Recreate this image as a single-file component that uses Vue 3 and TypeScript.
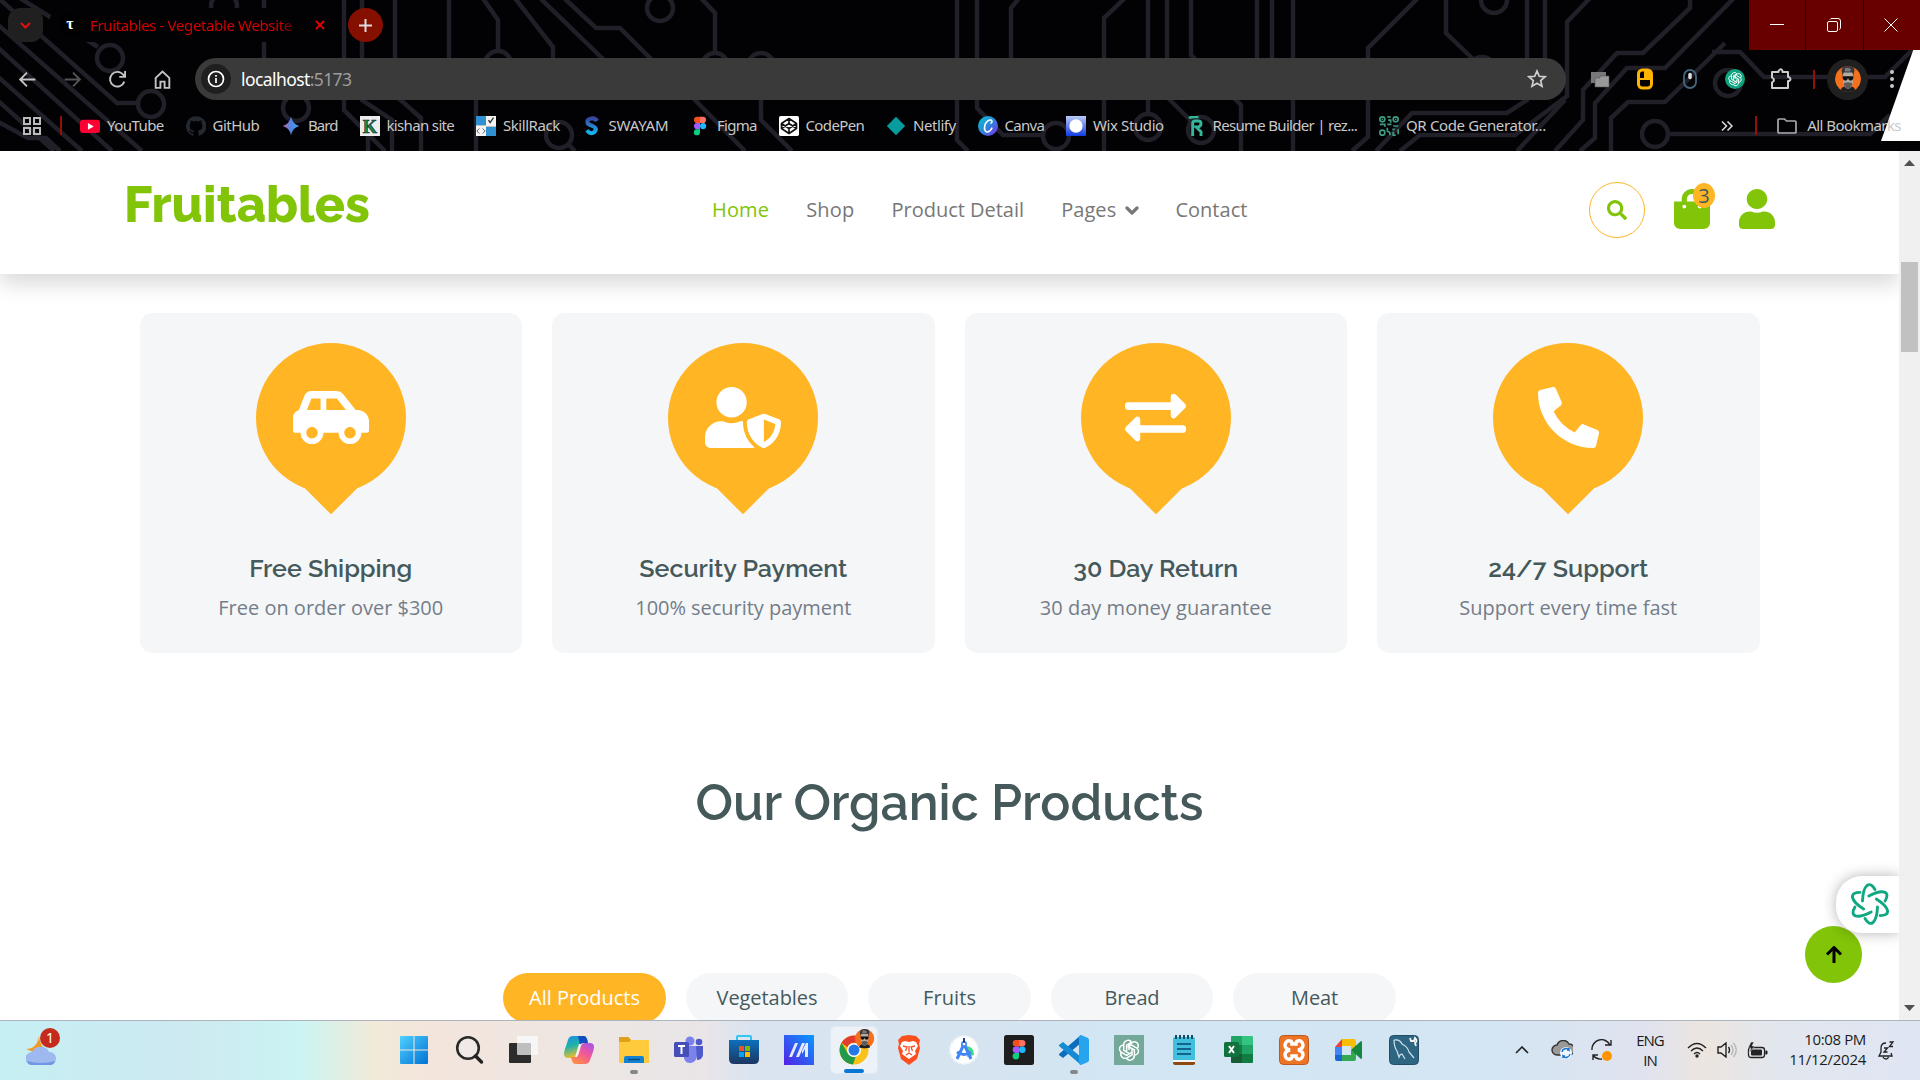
<script setup lang="ts">
import type { Directive } from 'vue'

// Spreads a label over a given width by adjusting its tracking.
const vFit: Directive<HTMLElement, number> = {
  mounted(el, binding) {
    const chars = (el.textContent ?? '').trim().length
    const natural = el.getBoundingClientRect().width
    if (chars > 1) el.style.letterSpacing = `${(binding.value - natural) / (chars - 0.5)}px`
  },
}

interface Bookmark { name: string; width: number; icon: string }
interface Feature { title: string; titleWidth: number; text: string; textWidth: number; box: string; iconWidth: number; path: string }

const face = '<circle cx="12" cy="12" r="12" fill="#f5701c"/><path d="M5 23q1-4 5-4h4q4 0 5 4-3 1-7 1t-7-1z" fill="#1c2026"/><path d="M7.500 7q0-2 4.500-2t4.500 2v8q-1 6-4.500 6t-4.500-6z" fill="#b3aba6"/><path d="M7 9 6 4q1-4 6-4 6 0 6 4l-1 5-1-3H8z" fill="#34363a"/><path d="M9 2q3-1 6 1l-1 2H9z" fill="#77787b"/><path d="M7 9.500h10v1.500q-.5 2.500-2.500 2.500T12 11q-.5 2.500-2.500 2.500T7 11z" fill="#111"/><path d="M8 16q4-2 8 0-1 5-4 5t-4-5z" fill="#5c5957"/>'
const knot = '<g fill="none" stroke="currentColor" stroke-width="1.500"><path d="M12 12V6.500l4-2.400q3.500-1 5 2 .8 2-.3 4"/><path d="M9.600 13.300V7.200l5.100-3q-2-2.700-5-1.600-3 1-3 4.200v5.600l5.300 3"/><path d="M6.700 7q-4 .5-4.200 4 0 2.200 2 3.400l5.200 3 5-3"/><path d="M4 14.300q-1 3.700 2 5.500 2 1 4 0l5-3v-5.600"/><path d="M9.400 20.200q2 2.700 5 1.700 3-1.200 3-4.300V12L12 9"/><path d="M17.300 17.200q4-.7 4.200-4 0-2.200-2-3.400l-5.200-3-4 2.300"/></g>'

const bookmarks: Bookmark[] = [
  { name: 'YouTube', width: 57, icon: '<rect y="4.500" width="24" height="16" rx="4" fill="#ff0033"/><path d="M9.500 8.500v8l7-4z" fill="#fff"/>' },
  { name: 'GitHub', width: 47, icon: '<path fill="#24292f" d="M12 .3a12 12 0 0 0-3.800 23.400c.6.1.8-.3.8-.6v-2.200c-3.300.7-4-1.400-4-1.400-.6-1.400-1.400-1.800-1.400-1.800-1-.7.1-.7.1-.7 1.200.1 1.900 1.200 1.900 1.200 1 1.800 2.800 1.300 3.500 1 .1-.8.400-1.300.8-1.600-2.700-.3-5.500-1.300-5.500-6 0-1.200.5-2.300 1.300-3.100-.2-.4-.6-1.600 0-3.200 0 0 1-.3 3.400 1.200a11.500 11.500 0 0 1 6 0c2.300-1.500 3.300-1.200 3.300-1.200.6 1.600.2 2.800 0 3.200.8.8 1.300 1.900 1.300 3.200 0 4.600-2.800 5.600-5.500 5.900.5.4.9 1.100.9 2.300v3.300c0 .3.100.7.800.6A12 12 0 0 0 12 .3"/>' },
  { name: 'Bard', width: 30, icon: '<defs><linearGradient id="bard"><stop stop-color="#c86a9a"/><stop offset=".5" stop-color="#4f86e8"/><stop offset="1" stop-color="#3aa0ef"/></linearGradient></defs><path d="M12 1q2 9 10 11-8 2-10 11-2-9-10-11 8-2 10-11z" fill="url(#bard)"/>' },
  { name: 'kishan site', width: 68, icon: '<rect width="24" height="24" fill="#ececec"/><text x="12" y="20" text-anchor="middle" font-family="Liberation Serif,serif" font-weight="bold" font-size="22" fill="#1c8a3e" stroke="#123" stroke-width=".7">K</text>' },
  { name: 'SkillRack', width: 57, icon: '<path fill="#2f91cf" d="M0 0h12v11H0zM12 13h12v11H12z"/><path fill="#f4f4f4" d="M12 0h12v13H12zM0 11h12v13H0z"/><path d="m15 5 2 3 4-6" stroke="#333" stroke-width="1.600" fill="none"/><path d="m4 15-3 3 3 3m4-6 3 3-3 3" stroke="#444" fill="none"/>' },
  { name: 'SWAYAM', width: 60, icon: '<defs><linearGradient id="sw" x2="0" y2="1"><stop stop-color="#39459f"/><stop offset="1" stop-color="#13b5f0"/></linearGradient></defs><path d="M18 6q-2-4-7-3-6 1-4 6 2 2 6 3 6 3 2 7-5 4-9-2" fill="none" stroke="url(#sw)" stroke-width="5"/>' },
  { name: 'Figma', width: 40, icon: '<path d="M12 1H8.500a3.700 3.700 0 0 0 0 7.400H12z" fill="#f24e1e"/><path d="M12 1h3.500a3.700 3.700 0 0 1 0 7.400H12z" fill="#ff7262"/><path d="M12 8.400H8.500a3.700 3.700 0 0 0 0 7.400H12z" fill="#a259ff"/><circle cx="15.700" cy="12.100" r="3.700" fill="#1abcfe"/><path d="M12 15.800H8.500a3.700 3.700 0 1 0 3.500 3.700z" fill="#0acf83"/>' },
  { name: 'CodePen', width: 59, icon: '<rect width="24" height="24" rx="2" fill="#fff"/><path d="m12 3 9 6v6l-9 6-9-6V9zM3 9l9 6 9-6M3 15l9-6 9 6M12 3v6m0 6v6" fill="none" stroke="#111" stroke-width="2" stroke-linejoin="round"/>' },
  { name: 'Netlify', width: 43, icon: '<path d="m12 1 11 11-11 11L1 12z" fill="#089c9c"/>' },
  { name: 'Canva', width: 40, icon: '<defs><linearGradient id="cv" x1="0" y1="0" x2="1" y2="1"><stop stop-color="#00c4cc"/><stop offset=".5" stop-color="#2d86dc"/><stop offset="1" stop-color="#7d2ae8"/></linearGradient></defs><circle cx="12" cy="12" r="12" fill="url(#cv)"/><path d="M15 9q3-2 1-4-4-1-7 4-3 7 1 10 4 1 7-5" fill="none" stroke="#fff" stroke-width="1.900"/>' },
  { name: 'Wix Studio', width: 71, icon: '<defs><linearGradient id="wx" x2="0" y2="1"><stop stop-color="#b9cbf6"/><stop offset="1" stop-color="#113be0"/></linearGradient></defs><rect width="24" height="24" fill="url(#wx)"/><circle cx="12" cy="12" r="8" fill="#fff"/>' },
  { name: 'Resume Builder | rez...', width: 145, icon: '<path d="M8 24V9q0-3 3-3h4q3 0 3 3t-3 4h-3l6 6v5M4 3q1-2 7-2h4" fill="none" stroke="#35b69b" stroke-width="3.500"/>' },
  { name: 'QR Code Generator...', width: 140, icon: '<g fill="none" stroke="#3d9c82" stroke-width="2"><circle cx="4" cy="4" r="3"/><circle cx="20" cy="4" r="3"/><circle cx="4" cy="20" r="3"/><path d="M10 1h4M11 5h3v3M1 10h6v3m3-3h5m2 2h6M10 14v4l3 2v3m3-7h3m4 0v6m-6-3v4h3"/></g><circle cx="4" cy="4" r="1" fill="#3d9c82"/><circle cx="20" cy="4" r="1" fill="#3d9c82"/>' },
]

const features: Feature[] = [
  { title: 'Free Shipping', titleWidth: 163, text: 'Free on order over $300', textWidth: 225, box: '0 0 640 512', iconWidth: 76, path: 'M544 192h-16L419.22 56.02A64.025 64.025 0 0 0 369.24 32H155.33c-26.17 0-49.7 15.93-59.42 40.23L48 194.26C20.44 201.4 0 226.21 0 256v112c0 8.84 7.16 16 16 16h48c0 53.02 42.98 96 96 96s96-42.98 96-96h128c0 53.02 42.98 96 96 96s96-42.98 96-96h48c8.84 0 16-7.16 16-16v-80c0-53.02-42.98-96-96-96zM160 432c-26.47 0-48-21.53-48-48s21.53-48 48-48 48 21.53 48 48-21.53 48-48 48zm72-240H116.93l38.4-96H232v96zm48 0V96h89.24l76.8 96H280zm200 240c-26.47 0-48-21.53-48-48s21.53-48 48-48 48 21.53 48 48-21.53 48-48 48z' },
  { title: 'Security Payment', titleWidth: 208, text: '100% security payment', textWidth: 216, box: '0 0 640 512', iconWidth: 76, path: 'M622.3 271.1l-115.2-45c-4.1-1.6-12.6-3.7-22.2 0l-115.2 45c-10.7 4.2-17.7 14-17.7 24.9 0 111.6 68.7 188.8 132.9 213.9 9.6 3.7 18 1.6 22.2 0C558.4 489.9 640 420.5 640 296c0-10.9-7-20.7-17.7-24.9zM496 462.4V273.3l95.5 37.3c-5.6 87.1-60.9 135.4-95.5 151.8zM224 256c70.7 0 128-57.3 128-128S294.7 0 224 0 96 57.3 96 128s57.3 128 128 128zm96 40c0-2.5.8-4.8 1.1-7.2-2.5-.1-4.9-.8-7.5-.8h-16.7c-22.2 10.2-46.9 16-72.9 16s-50.6-5.8-72.9-16h-16.7C60.2 288 0 348.2 0 422.4V464c0 26.5 21.5 48 48 48h352c6.8 0 13.3-1.5 19.2-4-54-42.9-99.2-116.7-99.2-212z' },
  { title: '30 Day Return', titleWidth: 165, text: '30 day money guarantee', textWidth: 232, box: '0 0 512 512', iconWidth: 61, path: 'M0 168v-16c0-13.255 10.745-24 24-24h360V80c0-21.367 25.899-32.042 40.971-16.971l80 80c9.372 9.373 9.372 24.569 0 33.941l-80 80C409.956 271.982 384 261.456 384 240v-48H24c-13.255 0-24-10.745-24-24zm488 152H128v-48c0-21.314-25.862-32.08-40.971-16.971l-80 80c-9.372 9.373-9.372 24.569 0 33.941l80 80C102.057 463.997 128 453.437 128 432v-48h360c13.255 0 24-10.745 24-24v-16c0-13.255-10.745-24-24-24z' },
  { title: '24/7 Support', titleWidth: 160, text: 'Support every time fast', textWidth: 218, box: '0 0 512 512', iconWidth: 61, path: 'M497.39 361.8l-112-48a24 24 0 0 0-28 6.9l-49.6 60.6A370.66 370.66 0 0 1 130.6 204.11l60.6-49.6a23.94 23.94 0 0 0 6.9-28l-48-112A24.16 24.16 0 0 0 122.6.61l-104 24A24 24 0 0 0 0 48c0 256.5 207.9 464 464 464a24 24 0 0 0 23.4-18.6l24-104a24.29 24.29 0 0 0-14.01-27.6z' },
]

const categories = [
  { name: 'All Products', width: 111 },
  { name: 'Vegetables', width: 101 },
  { name: 'Fruits', width: 53 },
  { name: 'Bread', width: 55 },
  { name: 'Meat', width: 47 },
]

// Taskbar pictograms, all on a 30 x 30 grid.
const apps: { id: string; art: string; state?: string }[] = [
  { id: 'start', art: '<defs><linearGradient id="wn" x1="0" y1="0" x2="1" y2="1"><stop stop-color="#4fd0ff"/><stop offset="1" stop-color="#0072d4"/></linearGradient></defs><path d="M1 2q0-1 1-1h12.500v13.500H1zM15.500 1H28q1 0 1 1v12.500H15.500zM1 15.500h13.500V29H2q-1 0-1-1zM15.500 15.500H29V28q0 1-1 1H15.500z" fill="url(#wn)"/>' },
  { id: 'search', art: '<circle cx="14" cy="13" r="10.800" fill="#eee" fill-opacity=".5" stroke="#2a2a2a" stroke-width="2.600"/><path d="m21.500 21 6 6" stroke="#222" stroke-width="3.400" stroke-linecap="round"/>' },
  { id: 'views', art: '<rect y="8" width="22" height="20" rx="1" fill="#2c2c2c"/><rect x="8" y="1" width="21" height="19" rx="1" fill="#f6f6f6" fill-opacity=".72"/><path d="M22 1h7v19h-7zM8 1h14v7H8z" fill="#f6f6f6"/>' },
  { id: 'copilot', art: '<defs><linearGradient id="c1" x2=".3" y2="1"><stop stop-color="#1b8fe8"/><stop offset=".5" stop-color="#20b3a6"/><stop offset="1" stop-color="#f0c02c"/></linearGradient><linearGradient id="c2" x1="1" y1="0" x2=".3" y2="1"><stop stop-color="#9a55f5"/><stop offset=".5" stop-color="#f0569b"/><stop offset="1" stop-color="#ff8a4a"/></linearGradient></defs><path d="M9 1h11q2 0 3 3l1 4h-5q-3 0-4 4l-2 8q-1 3-4 3H4q-4 0-4-4 0-2 1-5l3-9q1-4 5-4z" fill="url(#c1)"/><path d="M14 1h6q2 0 3 3l1 4h-5q-2 0-3 2z" fill="#134dc0"/><path d="M21 29H11q-2 0-3-3l-1-4h4q3 0 4-4l2-7q1-3 4-3h5q4 0 4 4 0 2-1 5l-3 8q-1 4-5 4z" fill="url(#c2)"/><path d="M17 9h-2l-4 13h2z" fill="#f6eef0"/>' },
  { id: 'files', state: 'idle', art: '<path d="M0 2h9l4 4h15v7H0z" fill="#dc9a10"/><rect y="5" width="30" height="23" rx="1" fill="#ffcb3d"/><path d="M0 2h9l3 3-2 2H0z" fill="#e0a01b"/><path d="M5 28v-5q0-2 2-2h16q2 0 2 2v5z" fill="#1483cf"/><path d="M9 24.500h12" stroke="#064c88" stroke-width="1.500"/>' },
  { id: 'teams', art: '<circle cx="16" cy="6" r="4.500" fill="#7b83eb"/><circle cx="25" cy="7" r="3.300" fill="#5059c9"/><path d="M10 11h13v10q-1 7-7 7-5 0-6-5z" fill="#7b83eb"/><path d="M22 11h7v9q-1 5-6 5z" fill="#5059c9"/><rect y="7" width="15" height="15" rx="1.500" fill="#464eb8"/><path d="M4 11h7M7.500 11v8" stroke="#fff" stroke-width="2"/>' },
  { id: 'store', art: '<defs><linearGradient id="st" x2="0" y2="1"><stop stop-color="#0c70bc"/><stop offset="1" stop-color="#1c365f"/></linearGradient></defs><path d="M8 6V2q0-1 1-1h12q1 0 1 1v4" fill="none" stroke="#31c6f2" stroke-width="2"/><path d="M0 5h30v19q0 5-5 5H5q-5 0-5-5z" fill="url(#st)"/><path d="M10 11h5v5h-5z" fill="#f25022"/><path d="M16 11h5v5h-5z" fill="#7fba00"/><path d="M10 17h5v5h-5z" fill="#00a4ef"/><path d="M16 17h5v5h-5z" fill="#ffb900"/>' },
  { id: 'myasus', art: '<defs><linearGradient id="ma" x1="0" y1="1" x2="1" y2="0"><stop stop-color="#5420e4"/><stop offset="1" stop-color="#079bff"/></linearGradient></defs><rect width="30" height="30" fill="url(#ma)"/><path d="m5 22 6-14h3L8 22zM12 22l6-14h3l-6 14zM18 16l4-8h2v14h-3v-8l-3 5z" fill="#e6e9ff"/>' },
  { id: 'chrome', state: 'active', art: '<circle cx="15" cy="15" r="14.500" fill="#fbc116"/><path d="M2.500 7.700A14.500 14.500 0 0 1 27.500 7.700H15a7 7 0 0 0-6.500 4.500z" fill="#e33b2e"/><path d="M2.500 7.700 9 18.500q3 4 7.500 3.500L14 29.500A14.500 14.500 0 0 1 2.500 7.700z" fill="#229a49"/><circle cx="15" cy="15" r="7" fill="#fff"/><circle cx="15" cy="15" r="5.500" fill="#2478e8"/><g transform="translate(16 -6) scale(.8)">' + face + '</g>' },
  { id: 'brave', art: '<path d="m8 1 7-1 7 1 4 4-1 4 1 4-3 11-8 6-8-6L4 13l1-4-1-4z" fill="#fb4f20"/><path d="m8 7 3-1 4 1 4-1 3 1 2 4-3 5 1 3-7 5-7-5 1-3-3-5z" fill="#fff"/><path d="m9 11 4 1-1.500 4M21 11l-4 1 1.500 4M12 20l3-2 3 2M15 11v6" fill="none" stroke="#fb4f20" stroke-width="1.300"/>' },
  { id: 'studio', art: '<circle cx="15" cy="15" r="14" fill="#fff" stroke="#edf3fa" stroke-width="2" stroke-dasharray="3 2"/><path d="M18 11q7 1 7 9l-7 2z" fill="#3ddc84"/><path d="m15 9-7 15m7-15 7 15M8 17q7 5 14 0" fill="none" stroke="#4285f4" stroke-width="3"/><circle cx="15" cy="9" r="3" fill="#4285f4"/><path d="M15 3v5" stroke="#1b3f87" stroke-width="2"/><circle cx="15" cy="9" r="1.300" fill="#fff"/>' },
  { id: 'figma', art: '<rect width="30" height="30" rx="2.500" fill="#1e1e1e"/><g transform="translate(4.500 4) scale(.88)">' + bookmarks[6].icon + '</g>' },
  { id: 'code', state: 'idle', art: '<path d="M22 0v8L4 23l-4-3v-1z" fill="#0b6ebd"/><path d="M0 11v-1l4-3 18 15v8z" fill="#168bd5"/><path d="m22 0 7 3q1 1 1 2v20q0 1-1 2l-7 3-2-1V1z" fill="#27a4ee"/>' },
  { id: 'chatgpt', art: '<rect width="30" height="30" fill="#74a899"/><g transform="translate(3 3)" color="#fff">' + knot + '</g>' },
  { id: 'notepad', art: '<rect x="4" y="2" width="22" height="25" rx="2" fill="#42bfdc"/><path d="M4 27h22v2q-1 1-2 1H6q-2 0-2-3z" fill="#8b4a13"/><path d="M4 25h22v2H4z" fill="#f4f4f4"/><path d="M7 0v4m4-4v4m4-4v4m4-4v4m4-4v4" stroke="#124c68" stroke-width="2"/><path d="M8 9h14M8 14h14M8 19h14" stroke="#11658a" stroke-width="1.800"/>' },
  { id: 'excel', art: '<path d="M7 2q0-1 1-1h10v9H7z" fill="#21a366"/><path d="M18 1h10q1 0 1 1v8H18z" fill="#33c481"/><path d="M7 10h11v9H7z" fill="#107c41"/><path d="M18 10h11v9H18z" fill="#21a366"/><path d="M7 19h11v9H8q-1 0-1-1z" fill="#185c37"/><path d="M18 19h11v8q0 1-1 1H18z" fill="#107c41"/><rect y="7" width="15" height="15" rx="1.500" fill="#10723c"/><path d="m5 11 5 7m0-7-5 7" stroke="#fff" stroke-width="2"/>' },
  { id: 'xampp', art: '<rect x=".5" y=".5" width="29" height="29" rx="4" fill="#ee7425" stroke="#bc5a1d"/><path d="M11 15q-5-1-5-5 1-5 5-4 2 0 2 3h4q0-3 2-3 4-1 5 4 0 4-5 5 5 1 5 5-1 5-5 4-2 0-2-3h-4q0 3-2 3-4 1-5-4 0-4 5-5z" fill="none" stroke="#fff" stroke-width="3.500"/>' },
  { id: 'meet', art: '<path d="M8 4v8H1z" fill="#ea4335"/><path d="M8 4h12q2 0 2 2v6l-5 3v-4H8z" fill="#fbbc04"/><path d="M1 12h7v8H1z" fill="#4285f4"/><path d="M1 20h7v6H3q-2 0-2-2z" fill="#1967d2"/><path d="M8 20h9v-5l5 3v6q0 2-2 2H8z" fill="#34a853"/><path d="m17 15 10-9q1 0 1 1v16q0 1-1 1z" fill="#16873f"/>' },
  { id: 'mysql', art: '<rect x=".5" y=".5" width="29" height="29" rx="4" fill="#2d6583" stroke="#234d66"/><path d="M5 5q6-1 8 4 6 3 7 8l5 6M5 5q0 7 3 11l2 6q1-3 3-3l3 5" fill="none" stroke="#d4e4ed" stroke-width="1.200"/><path d="m21 3 1 3 3 0 1-3q3 3 0 5l1 3" fill="none" stroke="#f4f4f4" stroke-width="1.800"/>' },
]

const traces = [
  'M15-5 98 47', 'M-5-5 117 103H137', 'M-5 22 142 151', 'M-5 45 112 151', 'M-5 74 82 151', 'M-5 98 54 151', 'M-5 120 28 138H46L60 151',
  'M264 0V60', 'M344 0V110L385 151', 'M362 0V100L392 120V151', 'M395 0V95L421 118V151', 'M449 0V60', 'M368 120V151', 'M476 95V151',
  'M482-3 498 20V60', 'M514-3 553 47V60', 'M539-3 604 60', 'M563-3 596 28H620L652 60', 'M700-3 715 13V60', 'M690 95 745 151', 'M761 60V120L792 151', 'M568 144 575 151',
  'M957 0V140L968 151', 'M977 0V108L1003 135H1041', 'M1020-3 1011 8V60', 'M1126-3 1104 18V151', 'M1148 0V112', 'M1167 0V60', 'M1191 0V55L1241 105V151', 'M1168 98 1194 124', 'M1257 0V60', 'M1272 0V60',
  'M1293 0V151', 'M1419-3 1368 48V137L1352 151', 'M1446 0V33L1474 60', 'M1527 0V100L1507 113H1412L1376 151', 'M1545 0V60', 'M1591-3 1567 22V96L1515 135H1420L1400 151', 'M1690 0V8L1643 53H1617L1583 90V120L1555 151', 'M1735-3 1665 68H1627L1595 103V138L1580 151', 'M1725 43 1665 102H1628L1611 118V151', 'M1712 52H1740L1764 77H1885L1920 42', 'M1669 134H1870L1890 115', 'M1565 100 1517 151',
]
const pads = [[110, 58], [151, 104], [224, 6], [296, 108], [498, 64], [559, 135], [660, 8], [715, 66], [761, 66], [1056, 136], [1148, 127], [1201, 130], [1494, 0], [1482, 70], [1728, 83], [1655, 134]]
</script>

<template>
  <div class="screen">
    <header class="chrome">
      <svg class="circuit" viewBox="0 0 1920 151">
        <path v-for="d in traces" :key="d" :d="d" />
        <circle v-for="p in pads" :key="p.join()" :cx="p[0]" :cy="p[1]" r="13" />
        <polygon points="1915,45 1920,45 1920,141 1881,141" />
      </svg>

      <div class="tabs">
        <div class="tab-search"><svg width="11" height="7" viewBox="0 0 11 7"><path d="m1 1 4.500 4.500L10 1" fill="none" stroke="#e01010" stroke-width="2" /></svg></div>
        <div class="tab">
          <span class="favicon">τ</span>
          <span class="tab-title"><span v-fit="202">Fruitables - Vegetable Website</span></span>
          <svg width="10" height="10" viewBox="0 0 10 10"><path d="m1 1 8 8m0-8L1 9" stroke="#e80000" stroke-width="1.800" /></svg>
        </div>
        <div class="new-tab"><svg width="13" height="13" viewBox="0 0 13 13"><path d="M6.500 0v13M0 6.500h13" stroke="#ddd" stroke-width="2" /></svg></div>
        <div class="window-buttons">
          <span><svg width="14" height="14"><path d="M0 6.500h14" stroke="#fff" /></svg></span>
          <span><svg width="14" height="14" viewBox="0 0 14 14"><g fill="none" stroke="#fff"><rect x=".5" y="3.500" width="10" height="10" rx="1.500" /><path d="M3 1.500Q3.500.5 5 .5h6q2.500 0 2.500 2.500v6q0 2-1 2.500" /></g></svg></span>
          <span><svg width="14" height="14"><path d="m.5.500 13 13m0-13-13 13" stroke="#fff" /></svg></span>
        </div>
      </div>

      <div class="toolbar">
        <svg class="nav-icon" viewBox="0 0 20 20"><path d="M17.500 10H3m6.500-6.500L3 10l6.500 6.500" /></svg>
        <svg class="nav-icon dim" viewBox="0 0 20 20"><path d="M2.500 10H17m-6.500-6.500L17 10l-6.500 6.500" /></svg>
        <svg class="nav-icon" viewBox="0 0 20 20"><path d="M16.500 12a7 7 0 1 1-1-6.500L17 7m.2-5v5.500h-5.500" /></svg>
        <svg class="nav-icon" viewBox="0 0 20 20"><path d="M3.500 8.500 10 2.500l6.500 6V18H12v-6H8v6H3.500z" /></svg>
        <div class="address">
          <span class="site-info"><svg width="18" height="18" viewBox="0 0 18 18"><circle cx="9" cy="9" r="7.500" fill="none" stroke="#fff" stroke-width="1.700" /><path d="M9 8v5M9 5v1.700" stroke="#fff" stroke-width="1.700" /></svg></span>
          <span class="url"><span v-fit="69">localhost</span><i v-fit="42">:5173</i></span>
          <svg width="20" height="20" viewBox="0 0 20 20"><path d="m10 2 2.300 5.300 5.700.5-4.300 3.800 1.300 5.700-5-3-5 3 1.300-5.700L2 7.800l5.700-.5z" fill="none" stroke="#d0d0d0" stroke-width="1.700" /></svg>
        </div>
        <div class="extensions">
          <svg width="20" height="20" viewBox="0 0 20 20"><path d="M1 3h15v11H1z" fill="#777" /><path d="M5 9h5V7h9v11H5z" fill="#999" stroke="#555" stroke-width=".6" /></svg>
          <svg width="20" height="22" viewBox="0 0 20 22"><rect x="3.500" y="2" width="13" height="18" rx="4" fill="none" stroke="#ffb500" stroke-width="3" /><path d="M3 11h14M10 2v9" stroke="#ffb500" stroke-width="2" /><path d="M4 2h6v9H4z" fill="#ffb500" fill-opacity="0" /><path d="M10 2h6v9h-6z" fill="#ffb500" /></svg>
          <svg width="20" height="22" viewBox="0 0 20 22"><rect x="4" y="2" width="12" height="18" rx="6" fill="none" stroke="#42677f" stroke-width="1.800" /><path d="M10 6.500v3" stroke="#ddd" stroke-width="3.500" stroke-linecap="round" /></svg>
          <svg width="20" height="20" viewBox="0 0 30 30"><circle cx="15" cy="15" r="15" fill="#10a37f" /><g transform="translate(3 3)" color="#fff" v-html="knot" /></svg>
          <svg width="22" height="22" viewBox="0 0 22 22"><path d="M2 4h6.500V3q2.500-3.500 4 0v1H18v5h1q3 2.500 0 4h-1v7H2v-5.500q4-2.500 0-5z" fill="none" stroke="#ccc" stroke-width="2" stroke-linejoin="round" /></svg>
        </div>
        <b class="rule" />
        <span class="profile"><svg width="26" height="26" viewBox="0 0 24 24" v-html="face" /></span>
        <svg class="menu" width="6" height="20"><g fill="#c8c8c8"><circle cx="3" cy="3" r="2" /><circle cx="3" cy="10" r="2" /><circle cx="3" cy="17" r="2" /></g></svg>
      </div>

      <div class="bookmarks">
        <svg class="apps-grid" width="20" height="20" viewBox="0 0 20 20"><g fill="none" stroke="#bbb" stroke-width="2"><path d="M2 2h6v6H2zM12 2h6v6h-6zM2 12h6v6H2zM12 12h6v6h-6z" /></g></svg>
        <b class="rule" />
        <div class="bookmark-list">
          <div v-for="b in bookmarks" :key="b.name" class="bookmark">
            <svg width="20" height="20" viewBox="0 0 24 24" v-html="b.icon" />
            <span class="bookmark-name" :style="{ width: b.width + 'px' }"><span v-fit="b.width">{{ b.name }}</span></span>
          </div>
        </div>
        <svg class="more" width="12" height="10" viewBox="0 0 12 10"><path d="m1 .5 4.500 4.500L1 9.500M6.500.5 11 5 6.500 9.500" fill="none" stroke="#ddd" stroke-width="1.500" /></svg>
        <b class="rule" />
        <svg class="folder" width="20" height="16" viewBox="0 0 20 16"><path d="M1 2q0-1 1-1h5.500l2 2H18q1 0 1 1v10q0 1-1 1H2q-1 0-1-1z" fill="none" stroke="#aaa" stroke-width="1.700" /></svg>
        <span class="all" v-fit="94">All Bookmarks</span>
      </div>
    </header>

    <div class="viewport">
      <main class="page">
        <nav class="site-nav">
          <div class="brand"><span v-fit="246">Fruitables</span></div>
          <div class="links">
            <a v-fit="57" class="current">Home</a>
            <a v-fit="48">Shop</a>
            <a v-fit="132.500">Product Detail</a>
            <a class="dropdown"><span v-fit="55">Pages</span><svg width="14" height="10" viewBox="0 0 14 10"><path d="m2 2 5 5 5-5" fill="none" stroke="#777" stroke-width="3.200" stroke-linecap="round" stroke-linejoin="round" /></svg></a>
            <a v-fit="72">Contact</a>
          </div>
          <div class="actions">
            <span class="search"><svg width="20" height="20" viewBox="0 0 512 512"><path d="M505 442.700L405.300 343c-4.500-4.500-10.600-7-17-7H372c27.600-35.300 44-79.700 44-128C416 93.100 322.900 0 208 0S0 93.100 0 208s93.100 208 208 208c48.300 0 92.700-16.400 128-44v16.300c0 6.400 2.500 12.500 7 17l99.700 99.700c9.400 9.400 24.600 9.400 33.900 0l28.300-28.300c9.400-9.400 9.400-24.600.1-34zM208 336c-70.700 0-128-57.200-128-128 0-70.700 57.200-128 128-128 70.700 0 128 57.200 128 128 0 70.700-57.200 128-128 128z" /></svg></span>
            <span class="bag"><svg width="36" height="40" viewBox="0 0 448 512" preserveAspectRatio="none"><path d="M352 160v-32C352 57.420 294.579 0 224 0 153.420 0 96 57.420 96 128v32H0v272c0 44.183 35.817 80 80 80h288c44.183 0 80-35.817 80-80V160h-96zm-192-32c0-35.290 28.710-64 64-64s64 28.710 64 64v32H160v-32zm160 120c-13.255 0-24-10.745-24-24s10.745-24 24-24 24 10.745 24 24-10.745 24-24 24zm-192 0c-13.255 0-24-10.745-24-24s10.745-24 24-24 24 10.745 24 24-10.745 24-24 24z" /></svg><em>3</em></span>
            <svg class="account" width="36" height="40" viewBox="0 0 448 512" preserveAspectRatio="none"><path d="M224 256c70.700 0 128-57.300 128-128S294.700 0 224 0 96 57.300 96 128s57.300 128 128 128zm89.600 32h-16.700c-22.200 10.200-46.900 16-72.900 16s-50.600-5.800-72.900-16h-16.700C60.200 288 0 348.200 0 422.400V464c0 26.500 21.500 48 48 48h352c26.500 0 48-21.500 48-48v-41.600c0-74.200-60.200-134.400-134.400-134.400z" /></svg>
          </div>
        </nav>

        <section class="features">
          <article v-for="f in features" :key="f.title" class="feature">
            <div class="marker"><svg :width="f.iconWidth" height="61" :viewBox="f.box"><path :d="f.path" fill="#fff" /></svg></div>
            <h5><span v-fit="f.titleWidth">{{ f.title }}</span></h5>
            <p><span v-fit="f.textWidth">{{ f.text }}</span></p>
          </article>
        </section>

        <h1><span v-fit="508">Our Organic Products</span></h1>

        <div class="pills">
          <span v-for="(c, i) in categories" :key="c.name" class="pill" :class="{ selected: i === 0 }"><span v-fit="c.width">{{ c.name }}</span></span>
        </div>

        <div class="to-top"><svg width="18" height="18" viewBox="0 0 18 18"><path d="M9 17V2M2 8.500l7-7 7 7" fill="none" stroke="#000" stroke-width="3" stroke-linejoin="round" /></svg></div>
        <div class="assistant">
          <svg width="42" height="46" viewBox="-21 -23 42 46"><g fill="none" stroke="#10a881" stroke-width="2.900" stroke-linecap="round"><path v-for="a in 6" :key="a" :transform="`rotate(${a * 60})`" d="M-7.500-3Q-7-15-3-18.500Q1-21.500 5-14.500" /></g></svg>
        </div>
      </main>
      <aside class="scrollbar">
        <svg width="11" height="6"><path d="M0 6 5.500 0 11 6z" fill="#505050" /></svg>
        <i class="thumb" />
        <svg width="11" height="6"><path d="m0 0 5.500 6L11 0z" fill="#505050" /></svg>
      </aside>
    </div>

    <footer class="taskbar">
      <div class="weather">
        <svg width="30" height="29" viewBox="0 0 30 29"><path d="M13 0q1 12 9 14l-10 4L0 13q11 0 13-13z" fill="#f39a1d" /><path d="M6 29a6.500 6.500 0 0 1 0-13 9 8 0 0 1 17 0 6.500 6.500 0 0 1 1 13z" fill="#9db9ef" /><path d="M1 25q14 4 28 0-1 4-5 4H6q-4 0-5-4z" fill="#7197e4" /></svg>
        <em>1</em>
      </div>
      <div class="apps">
        <div v-for="a in apps" :key="a.id" class="app" :class="a.state"><svg width="30" height="30" viewBox="0 0 30 30" v-html="a.art" /></div>
      </div>
      <div class="tray">
        <svg class="up" width="14" height="8" viewBox="0 0 14 8"><path d="m1 7 6-6 6 6" fill="none" stroke="#222" stroke-width="1.600" /></svg>
        <svg width="22" height="20" viewBox="0 0 22 20"><path d="M6 15a5 5 0 0 1 0-10 6.500 6.500 0 0 1 12-1 5 5 0 0 1 0 11z" fill="#999" stroke="#333" stroke-width="1.400" /><circle cx="15" cy="13" r="6" fill="#eef6ff" /><path d="M11 12a4 4 0 0 1 7-2V8m0 2h-2m3 4a4 4 0 0 1-7 2v2m0-2h2" fill="none" stroke="#1672cf" stroke-width="1.400" /></svg>
        <svg class="update" width="22" height="22" viewBox="0 0 22 22"><path d="M1 11A9.500 9.500 0 0 1 19 6m1-5v5h-6M11 20A9.500 9.500 0 0 1 2 16m0 5v-5h5" fill="none" stroke="#222" stroke-width="1.400" /><circle cx="16" cy="17" r="5" fill="#ff9500" /></svg>
        <div class="lang"><span v-fit="28">ENG</span><span v-fit="14">IN</span></div>
        <svg class="wifi" width="20" height="16" viewBox="0 0 20 16"><path d="M1 6q9-9 18 0M4 9q6-6 12 0M7 12q3-3 6 0" fill="none" stroke="#222" stroke-width="1.400" /><circle cx="10" cy="14" r="1.700" fill="#222" /></svg>
        <svg class="volume" width="20" height="16" viewBox="0 0 20 16"><path d="M1 5h3l5-4v14l-5-4H1zM11.500 5q2 3 0 6" fill="none" stroke="#222" stroke-width="1.400" /><path d="M14 3q4 5 0 10M16.500 1q5.500 7 0 14" fill="none" stroke="#b8b8bc" stroke-width="1.400" /></svg>
        <svg class="battery" width="21" height="17" viewBox="0 0 21 17"><rect x="1.500" y="5.500" width="16" height="10" rx="2.500" fill="none" stroke="#222" stroke-width="1.300" /><rect x="4" y="7.500" width="11" height="6" rx="1" fill="#222" /><path d="M18.500 9h1.500v3h-1.500" stroke="#222" /><path d="M4 0 1 6h3L2 11l6-7H5l2-4z" fill="#222" stroke="#eee" stroke-width=".5" /></svg>
        <div class="clock"><span v-fit="62">10:08 PM</span><span v-fit="77">11/12/2024</span></div>
        <svg class="bell" width="18" height="20" viewBox="0 0 18 20"><path d="M9 3q-5 0-5 5v4l-2 4h13l-1-3M6 17q1 2 3 2t2.500-2" fill="none" stroke="#222" stroke-width="1.300" /><path d="M7 8h3.500L7 12h3.500M12.500 2H16l-3.500 4.500H16" fill="none" stroke="#222" stroke-width="1.300" /></svg>
      </div>
    </footer>
  </div>
</template>

<style>
body { margin: 0; overflow: hidden; }
</style>

<style scoped>
* { box-sizing: border-box; }
svg { display: block; flex: none; }
.screen { width: 1920px; height: 1080px; display: flex; flex-direction: column; overflow: hidden; background: #fff; font-family: "Open Sans", sans-serif; white-space: nowrap; }
.screen span, .screen a { flex: none; }

.chrome { position: relative; flex: 0 0 151px; background: #020104; font: 15px "Noto Sans", sans-serif; color: #c9c9c9; overflow: hidden; }
.circuit { position: absolute; inset: 0; width: 1920px; height: 151px; fill: none; stroke: #211f27; stroke-width: 4.5; }
.circuit circle { fill: #020104; }
.circuit polygon { fill: #fff; stroke: none; }
.tabs, .toolbar, .bookmarks { position: relative; display: flex; align-items: center; }
.tabs { height: 50px; padding-left: 8px; }
.tab-search { width: 35px; height: 34px; border-radius: 12px; background: #202020; display: grid; place-items: center; }
.tab { width: 290px; height: 34px; margin-left: 7px; padding: 0 15px 0 9px; display: flex; align-items: center; background: #020104; border-radius: 12px; color: #d30000; }
.favicon { width: 22px; height: 22px; border-radius: 50%; background: #000; color: #fff; font: bold 16px/20px "Liberation Serif", serif; text-align: center; }
.tab-title { width: 214px; margin: 0 auto 0 9px; overflow: hidden; mask-image: linear-gradient(90deg, #000 88%, transparent); }
.new-tab { width: 35px; height: 34px; margin-left: 8px; border-radius: 50%; background: #851000; display: grid; place-items: center; }
.window-buttons { display: flex; gap: 1px; margin-left: auto; align-self: stretch; }
.window-buttons span { width: 56.500px; height: 50px; background: #690000; display: grid; place-items: center; }
.window-buttons span:last-child { padding-right: 1px; }

.toolbar { height: 58px; padding-left: 17px; }
.nav-icon { width: 21px; height: 21px; margin-right: 24px; fill: none; stroke: #c4c4c4; stroke-width: 1.8; }
.dim { stroke: #555; }
.address { width: 1371px; height: 42px; margin-left: -2px; padding: 0 19px 0 6px; border-radius: 21px; background: #3a3a3a; display: flex; align-items: center; }
.site-info { width: 30px; height: 30px; border-radius: 50%; background: #1f1f1f; display: grid; place-items: center; }
.url { margin: 0 auto 0 10px; font-size: 17.5px; color: #fff; }
.url i { font-style: normal; color: #9d9d9d; }
.extensions { display: flex; gap: 25px; align-items: center; margin-left: 24px; }
.rule { width: 2px; height: 19px; background: #921004; flex: none; }
.toolbar .rule { margin-left: 21px; }
.profile { width: 41px; height: 41px; margin-left: 12px; border-radius: 50%; background: #202020; display: grid; place-items: center; }
.profile svg { border-radius: 50%; }
.menu { margin-left: 21px; }

.bookmarks { height: 35px; padding-left: 22px; }
.bookmarks > .rule:nth-child(2) { margin: 0 18px; }
.bookmark-list { display: flex; gap: 20.500px; }
.bookmark { display: flex; align-items: center; gap: 8px; }
.bookmark-name { display: block; }
.bookmark-name > span { display: inline-block; margin-left: -1px; }
.bookmark-name, .all { padding-bottom: 1px; }
.more { margin: 0 22px 0 auto; }
.folder { margin: 0 10px 0 20px; }
.bookmarks > .all { margin-right: 19px; }

.viewport { flex: 1; min-height: 0; display: flex; }
.page { position: relative; width: 1899px; overflow: hidden; background: #fff; }
.site-nav { position: relative; height: 123px; display: flex; padding-left: 124px; box-shadow: 0 10px 20px rgba(0, 0, 0, .15); }
.brand { width: 588px; padding-top: 20px; font: 800 50px/68px Raleway, Lato, sans-serif; color: #81c408; }
.links { display: flex; gap: 37.200px; height: 60px; margin-top: 28px; align-items: center; font-size: 20px; color: #777; }
.links .current { color: #81c408; }
.dropdown { display: flex; align-items: center; gap: 9px; margin-right: -1px; }
.dropdown svg { margin-top: 3px; }
.actions { display: flex; align-items: center; height: 55px; margin: 31px 124px 0 auto; gap: 29px; fill: #81c408; }
.search { width: 56px; height: 56px; border: 1px solid #ffb524; border-radius: 50%; display: grid; place-items: center; }
.bag { position: relative; margin-bottom: 1px; }
.account { margin-bottom: 1px; }
.bag em { position: absolute; left: 19px; top: -6px; width: 22px; height: 25px; border-radius: 50%; background: #ffb524; color: #45595b; font: 20px/25px "Open Sans", sans-serif; text-align: center; }

.features { display: flex; gap: 30px; padding: 39px 139.500px 0; }
.feature { width: 382.500px; height: 340px; padding-top: 30px; border-radius: 12.500px; background: #f4f6f8; text-align: center; }
.marker { position: relative; width: 150px; height: 150px; margin: 0 auto; padding-bottom: 2px; border-radius: 50%; background: #ffb524; display: grid; place-items: center; }
.marker::after { content: ""; position: absolute; left: 50px; bottom: -11px; width: 50px; height: 50px; background: #ffb524; transform: rotate(45deg); }
.marker svg { position: relative; z-index: 1; }
h5 { margin: 60px 0 0; font: 600 25px/30px Raleway, Lato, sans-serif; font-variant-numeric: oldstyle-nums; color: #45595b; }
.feature p { margin: 10px 0 0; font-size: 20px; line-height: 30px; color: #747d88; }
h1 { margin: 120px 0 0; height: 60px; text-align: center; font: 600 50px/60px Raleway, Lato, sans-serif; color: #45595b; }
.pills { display: flex; justify-content: center; gap: 20px; margin-top: 140px; }
.pill { width: 162.500px; height: 50px; border-radius: 25px; background: #f4f6f8; color: #45595b; font-size: 20px; line-height: 50px; text-align: center; }
.pill.selected { background: #ffb524; color: #fff; }
.assistant { position: absolute; right: 0; top: 725px; width: 63px; height: 57px; padding: 5px 0 0 13px; border-radius: 26px 0 0 26px; background: #fff; box-shadow: 0 0 14px rgba(0, 0, 0, .3); }
.to-top { position: absolute; left: 1805px; top: 775px; width: 57px; height: 57px; border-radius: 50%; background: #81c408; display: grid; place-items: center; }

.scrollbar { width: 21px; padding: 9px 0; display: flex; flex-direction: column; align-items: center; background: #f0f0f0; }
.thumb { width: 17px; height: 90px; margin: 96px 0 auto; background: #c1c1c1; }

.taskbar { position: relative; flex: 0 0 60px; padding-bottom: 1px; border-top: 1px solid #adb4bd; display: flex; align-items: center; color: #1c1c1c; font-size: 15px; background: linear-gradient(90deg, #c5eff3 0, #cde9f1 180px, #cbf4f3 300px, #f2ead9 375px, #f3e5dc 430px, #ece6e4 620px, #e9e5e8 705px, #dae4f0 750px, #d5e4f0 1000px, #d2e6f4 1130px, #d4e5f3 1500px, #e0e3ef 1645px, #ece5df 1705px, #e2e7ee 1770px, #dfe5f3 1920px); }
.weather { position: relative; margin-left: 26px; }
.weather em { position: absolute; left: 14px; top: -8px; width: 20px; height: 20px; border-radius: 50%; background: #c42b1c; color: #fff; font: 14px/20px "Noto Sans", sans-serif; text-align: center; }
.apps { display: flex; margin-left: 333.500px; gap: 7.050px; }
.app { position: relative; width: 48px; height: 48px; display: grid; place-items: center; border-radius: 5px; }
.app svg { overflow: visible; }
.app.active { background: #edf2f9; border: 1px solid #e2e8f0; }
.app.active::after, .app.idle::after { content: ""; position: absolute; left: 50%; bottom: 0; height: 4px; border-radius: 2px; transform: translateX(-50%); }
.app.active::after { width: 20px; background: #0878d4; }
.app.idle::after { width: 8px; background: #85888b; }
.tray { display: flex; align-items: center; margin: 0 25px 0 auto; }
.up { margin-right: 22px; }
.update { margin-left: 18px; }
.lang { display: flex; flex-direction: column; align-items: center; width: 30px; margin: -1px 22px 0 22px; line-height: 20px; }
.volume { margin-left: 10px; }
.battery { margin-left: 10px; }
.clock { display: flex; flex-direction: column; align-items: flex-end; width: 78px; margin: -2px 11px 0 20px; line-height: 20px; }
</style>
